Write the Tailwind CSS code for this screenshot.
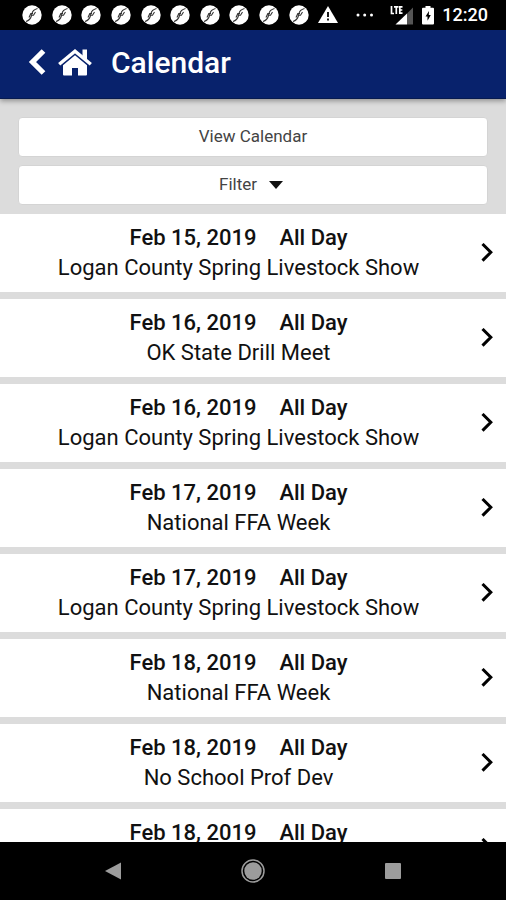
<!DOCTYPE html>
<html lang="en">
<head>
<meta charset="utf-8">
<meta name="viewport" content="width=device-width, initial-scale=1">
<title>Calendar</title>
<script src="https://cdn.jsdelivr.net/npm/@tailwindcss/browser@4"></script>
</head>
<body class="flex h-dvh flex-col overflow-hidden bg-[#dcdcdc] font-['Roboto',sans-serif] text-[#111]">
<svg class="hidden" aria-hidden="true">
  <symbol id="bolt" viewBox="0 0 20 20"><circle cx="10" cy="10" r="9.7" fill="#fff"/><path d="M15.5 3.500C12 4.500 10.500 6 10 8.500L9.200 11.500C8.500 14 7 15.500 4 16.500M13.500 7 11.500 10.200H9.500M11 8.500H8.800L7 12.500" fill="none" stroke="#333" stroke-width="1.1"/></symbol>
  <symbol id="chevron" viewBox="0 0 12 20"><path d="M1.500 1 9.800 9.300 1.500 17.600" fill="none" stroke="#000" stroke-width="3"/></symbol>
</svg>

<div class="flex h-[30px] shrink-0 items-center bg-black pr-[18px] pl-[22px] text-white">
  <div class="flex flex-1 items-center justify-between">
    <svg class="size-5"><use href="#bolt"/></svg>
    <svg class="size-5"><use href="#bolt"/></svg>
    <svg class="size-5"><use href="#bolt"/></svg>
    <svg class="size-5"><use href="#bolt"/></svg>
    <svg class="size-5"><use href="#bolt"/></svg>
    <svg class="size-5"><use href="#bolt"/></svg>
    <svg class="size-5"><use href="#bolt"/></svg>
    <svg class="size-5"><use href="#bolt"/></svg>
    <svg class="size-5"><use href="#bolt"/></svg>
    <svg class="size-5"><use href="#bolt"/></svg>
    <svg class="size-5" viewBox="0 0 20 20"><path d="M10 1 20 18H0Z" fill="#fff"/><path d="M10 7v5M10 13.6v2" stroke="#000" stroke-width="1.8"/></svg>
  </div>
  <svg class="ml-[18px] h-1 w-[18px]" viewBox="0 0 18 4"><g fill="#fff"><circle cx="2" cy="2" r="1.5"/><circle cx="8.7" cy="2" r="1.5"/><circle cx="15.5" cy="2" r="1.5"/></g></svg>
  <svg class="ml-4 h-5 w-6" viewBox="0 0 24 20"><path d="M17 8.500 23 2.500V19.500H17Z" fill="#555"/><path d="M17 8.500V19.500H5.500Z" fill="#fff"/><path d="M1.500 1v7.500h2.500M4 1.800h4.500M6.300 1.800V9M12.500 1.800H9.800V8.200H12.500M9.800 5h2.500" fill="none" stroke="#fff" stroke-width="1.7"/></svg>
  <svg class="ml-2 h-5 w-3" viewBox="0 0 12 20"><path d="M3.500 1h5v1.800H11a1 1 0 0 1 1 1V18.500a1 1 0 0 1-1 1H1a1 1 0 0 1-1-1V3.800a1 1 0 0 1 1-1h2.500Z" fill="#fff"/><path d="M7 6 3.500 11.500h2v4.300L8.800 10H6.800Z" fill="#000"/></svg>
  <span class="ml-2 text-lg font-medium">12:20</span>
</div>

<header class="relative flex h-[69px] shrink-0 items-center border-b border-[#071b50] bg-[#08226c] pb-1 pl-7 text-white shadow-[0_2px_5px_rgba(0,0,0,0.35)]">
  <button type="button" aria-label="Back"><svg class="h-7 w-[18px]" viewBox="0 0 18 28"><path d="M15.500 3 4.500 14 15.500 25" fill="none" stroke="#fff" stroke-width="5.2"/></svg></button>
  <a href="#" aria-label="Home" class="ml-3"><svg class="h-[27px] w-[34px]" viewBox="0 0 34 27"><path d="M1.200 15.300 17 2.200 32.800 15.300" fill="none" stroke="#fff" stroke-width="3.4"/><path d="M24.500 0.500h4.500V11L24.500 7.200Z" fill="#fff"/><path d="M17 6.200 29 16.200V25.500a1 1 0 0 1-1 1H20V19H14V26.500H6a1 1 0 0 1-1-1V16.200Z" fill="#fff"/></svg></a>
  <h1 class="ml-[19px] text-[30px] font-medium">Calendar</h1>
</header>

<div class="flex shrink-0 flex-col gap-2 px-[18px] pt-[18px] pb-[9px] text-[17px] text-[#444]">
  <button type="button" class="flex h-10 items-center justify-center rounded-sm border border-[#d4d4d4] bg-white">View Calendar</button>
  <button type="button" class="flex h-10 items-center justify-center gap-3 rounded-sm border border-[#d4d4d4] bg-white pr-1">Filter <svg class="h-2 w-[14px]" viewBox="0 0 14 8"><path d="M0 0H14L7 8Z" fill="#111"/></svg></button>
</div>

<main class="min-h-0 flex-1 overflow-hidden">
  <ul class="flex flex-col gap-[7px] text-center text-[22px] leading-[30px]">
    <li><a href="#" class="flex items-center bg-white py-[9px] pr-[13px]"><span class="flex-1 pr-1"><span class="flex justify-center gap-[23px] font-medium"><time>Feb 15, 2019</time><span>All Day</span></span><span class="block">Logan County Spring Livestock Show</span></span><svg class="h-5 w-3"><use href="#chevron"/></svg></a></li>
    <li><a href="#" class="flex items-center bg-white py-[9px] pr-[13px]"><span class="flex-1 pr-1"><span class="flex justify-center gap-[23px] font-medium"><time>Feb 16, 2019</time><span>All Day</span></span><span class="block">OK State Drill Meet</span></span><svg class="h-5 w-3"><use href="#chevron"/></svg></a></li>
    <li><a href="#" class="flex items-center bg-white py-[9px] pr-[13px]"><span class="flex-1 pr-1"><span class="flex justify-center gap-[23px] font-medium"><time>Feb 16, 2019</time><span>All Day</span></span><span class="block">Logan County Spring Livestock Show</span></span><svg class="h-5 w-3"><use href="#chevron"/></svg></a></li>
    <li><a href="#" class="flex items-center bg-white py-[9px] pr-[13px]"><span class="flex-1 pr-1"><span class="flex justify-center gap-[23px] font-medium"><time>Feb 17, 2019</time><span>All Day</span></span><span class="block">National FFA Week</span></span><svg class="h-5 w-3"><use href="#chevron"/></svg></a></li>
    <li><a href="#" class="flex items-center bg-white py-[9px] pr-[13px]"><span class="flex-1 pr-1"><span class="flex justify-center gap-[23px] font-medium"><time>Feb 17, 2019</time><span>All Day</span></span><span class="block">Logan County Spring Livestock Show</span></span><svg class="h-5 w-3"><use href="#chevron"/></svg></a></li>
    <li><a href="#" class="flex items-center bg-white py-[9px] pr-[13px]"><span class="flex-1 pr-1"><span class="flex justify-center gap-[23px] font-medium"><time>Feb 18, 2019</time><span>All Day</span></span><span class="block">National FFA Week</span></span><svg class="h-5 w-3"><use href="#chevron"/></svg></a></li>
    <li><a href="#" class="flex items-center bg-white py-[9px] pr-[13px]"><span class="flex-1 pr-1"><span class="flex justify-center gap-[23px] font-medium"><time>Feb 18, 2019</time><span>All Day</span></span><span class="block">No School Prof Dev</span></span><svg class="h-5 w-3"><use href="#chevron"/></svg></a></li>
    <li><a href="#" class="flex items-center bg-white py-[9px] pr-[13px]"><span class="flex-1 pr-1"><span class="flex justify-center gap-[23px] font-medium"><time>Feb 18, 2019</time><span>All Day</span></span><span class="block">&nbsp;</span></span><svg class="h-5 w-3"><use href="#chevron"/></svg></a></li>
  </ul>
</main>

<nav class="flex h-[58px] shrink-0 items-center justify-center gap-[116px] bg-black" aria-label="System">
  <button type="button" aria-label="Back" class="flex size-6 items-center justify-center"><svg class="h-[18px] w-4" viewBox="0 0 16 18"><path d="M0 9 16 0.500V17.500Z" fill="#9c9c9c"/></svg></button>
  <button type="button" aria-label="Home" class="flex size-6 items-center justify-center"><svg class="size-6" viewBox="0 0 24 24"><circle cx="12" cy="12" r="11" fill="none" stroke="#9c9c9c" stroke-width="1.5"/><circle cx="12" cy="12" r="8.700" fill="#9c9c9c"/></svg></button>
  <button type="button" aria-label="Overview" class="flex size-6 items-center justify-center"><svg class="size-4" viewBox="0 0 16 16"><rect width="16" height="16" rx="1" fill="#9c9c9c"/></svg></button>
</nav>
</body>
</html>
